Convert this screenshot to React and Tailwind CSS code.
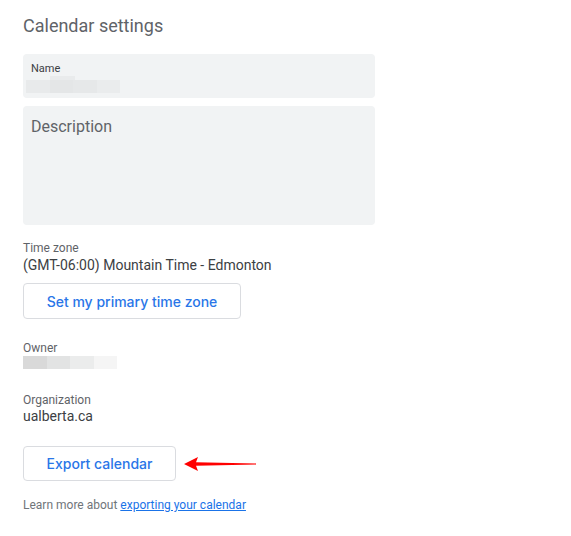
const Blur = ({ colors }) => (
  <div className="flex h-[13px]">
    {colors.map((c, i) => (
      <div key={i} className="w-[23.5px] h-full" style={{ backgroundColor: c }} />
    ))}
  </div>
);

export default function App() {
  return (
    <div className="w-[571px] h-[536px] bg-white font-['Roboto',sans-serif] overflow-hidden">
      <div className="pl-[23px] pt-[14px] w-[375px]">
        <h1 className="text-[18px] leading-[24px] text-[#5f6368] font-normal">Calendar settings</h1>

        <div className="mt-[16px] h-[44px] rounded-[4px] bg-[#f1f3f4] pt-[8px]">
          <div className="pl-[8px] text-[11px] leading-[14px] text-[#3c4043]">Name</div>
          <div className="ml-[3px] flex flex-col">
            <div className="flex h-[4px]">
              <div className="w-[24px] bg-[#f1f3f4]" />
              <div className="w-[25px] bg-[#e9ebec]" />
            </div>
            <Blur colors={['#e8eaeb', '#e4e6e7', '#e6e8e9', '#eaeced']} />
          </div>
        </div>

        <div className="mt-[8px] h-[119px] rounded-[4px] bg-[#f1f3f4] pl-[8px] pt-[11px]">
          <div className="text-[16px] leading-[20px] text-[#5f6368]">Description</div>
        </div>

        <div className="mt-[16px] text-[12px] leading-[14px] text-[#5f6368]">Time zone</div>
        <div className="mt-[1px] text-[14px] leading-[18px] text-[#3c4043]">(GMT-06:00) Mountain Time - Edmonton</div>
        <button className="mt-[9px] w-[218px] h-[36px] rounded-[4px] border border-[#dadce0] bg-white font-['Inter',sans-serif] text-[14px] font-medium text-[#2a76e8]">
          Set my primary time zone
        </button>

        <div className="mt-[22px] text-[12px] leading-[14px] text-[#5f6368]">Owner</div>
        <div className="mt-[1px]">
          <Blur colors={['#d9d9d9', '#e2e3e3', '#ebecec', '#f5f5f5']} />
        </div>

        <div className="mt-[24px] text-[12px] leading-[14px] text-[#5f6368]">Organization</div>
        <div className="mt-[0px] text-[14px] leading-[18px] text-[#3c4043]">ualberta.ca</div>

        <div className="mt-[21px] flex items-center">
          <button className="w-[153px] h-[35px] rounded-[4px] border border-[#dadce0] bg-white font-['Inter',sans-serif] text-[14px] font-medium text-[#2a76e8]">
            Export calendar
          </button>
          <svg width="76" height="16" viewBox="0 0 76 16" className="ml-[8px]">
            <path d="M0 8 L14 1 L12 6.3 L72 7.4 L72 8.6 L12 9.7 L14 15 Z" fill="#f00" />
          </svg>
        </div>

        <div className="mt-[17px] text-[12px] leading-[14px] text-[#70757a]">
          Learn more about{' '}
          <a href="#" className="text-[#1a73e8] underline">exporting your calendar</a>
        </div>
      </div>
    </div>
  );
}
